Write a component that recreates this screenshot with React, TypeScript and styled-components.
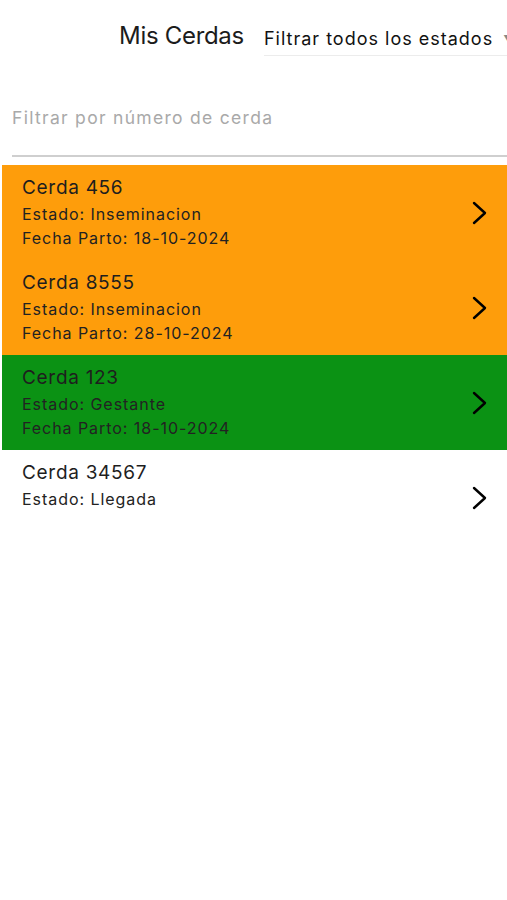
import styled, { createGlobalStyle } from "styled-components";

const GlobalStyle = createGlobalStyle`
  body {
    margin: 0;
    background: #ffffff;
    font-family: Inter, "Noto Sans", sans-serif;
    overflow-x: hidden;
  }
`;

const Screen = styled.div`
  width: 507px;
  min-height: 900px;
  background: #ffffff;
  overflow: hidden;
`;

const Header = styled.div`
  display: flex;
  align-items: flex-end;
  height: 56px;
  padding-left: 119px;
  gap: 20px;
  white-space: nowrap;
`;

const Title = styled.h1`
  margin: 0 0 6px;
  font-size: 24px;
  font-weight: 400;
  color: #1c1c1c;
  letter-spacing: -0.3px;
`;

const Picker = styled.div`
  display: flex;
  align-items: center;
  gap: 10px;
  flex: 1;
  padding-bottom: 6px;
  border-bottom: 1px solid #ececec;
  font-size: 18px;
  color: #111;
  letter-spacing: 1px;
`;

const Caret = styled.span`
  font-size: 10px;
  color: #888;
`;

const SearchBox = styled.div`
  margin: 37px 0 0 12px;
  height: 62px;
  border-bottom: 2px solid #cfcfcf;
  display: flex;
  align-items: flex-start;
`;

const SearchInput = styled.input`
  border: none;
  outline: none;
  width: 100%;
  padding: 14px 0 0;
  font-family: Inter, "Noto Sans", sans-serif;
  font-size: 17.5px;
  letter-spacing: 1.3px;
  color: #222;
  background: transparent;

  &::placeholder {
    color: #a9a9a9;
  }
`;

const List = styled.div`
  margin-top: 8px;
  padding-left: 2px;
`;

const Row = styled.div<{ $bg: string }>`
  display: flex;
  align-items: center;
  height: 95px;
  padding: 0 20px 0 20px;
  background: ${(p) => p.$bg};
  box-sizing: border-box;
`;

const Info = styled.div`
  flex: 1;
  display: flex;
  flex-direction: column;
  align-self: flex-start;
  padding-top: 11px;
`;

const Name = styled.div`
  font-size: 19px;
  color: #1e1e1e;
  letter-spacing: 0.7px;
  line-height: 24px;
  margin-bottom: 2px;
`;

const Detail = styled.div`
  font-size: 16px;
  color: #222;
  letter-spacing: 0.95px;
  line-height: 24px;
`;

const Chevron = () => (
  <svg width="16" height="24" viewBox="0 0 16 24" fill="none">
    <polyline
      points="3,2 14,12 3,22"
      stroke="#000"
      strokeWidth="2.4"
      strokeLinecap="round"
      strokeLinejoin="round"
    />
  </svg>
);

const cerdas = [
  { name: "Cerda 456", estado: "Inseminacion", parto: "18-10-2024", bg: "#fe9d0b" },
  { name: "Cerda 8555", estado: "Inseminacion", parto: "28-10-2024", bg: "#fe9d0b" },
  { name: "Cerda 123", estado: "Gestante", parto: "18-10-2024", bg: "#0b9214" },
  { name: "Cerda 34567", estado: "Llegada", parto: "", bg: "#ffffff" },
];

export default function App() {
  return (
    <Screen>
      <GlobalStyle />
      <Header>
        <Title>Mis Cerdas</Title>
        <Picker>
          Filtrar todos los estados <Caret>▼</Caret>
        </Picker>
      </Header>
      <SearchBox>
        <SearchInput placeholder="Filtrar por número de cerda" />
      </SearchBox>
      <List>
        {cerdas.map((c) => (
          <Row key={c.name} $bg={c.bg}>
            <Info>
              <Name>{c.name}</Name>
              <Detail>Estado: {c.estado}</Detail>
              {c.parto && <Detail>Fecha Parto: {c.parto}</Detail>}
            </Info>
            <Chevron />
          </Row>
        ))}
      </List>
    </Screen>
  );
}
